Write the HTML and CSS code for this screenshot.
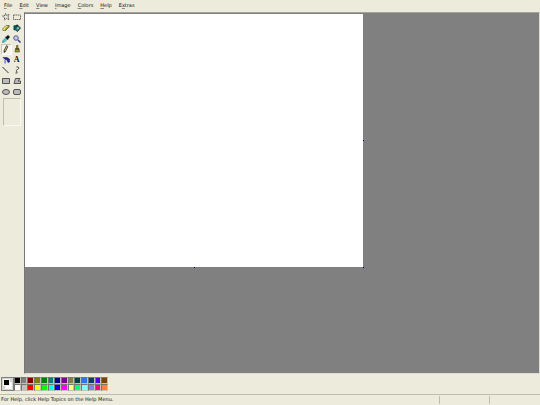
FILE: index.html
```html
<!DOCTYPE html>
<html lang="en">
<head>
    <meta charset="UTF-8">
    <meta name="viewport" content="width=device-width, initial-scale=1.0">
    <title>Paint</title>
    <link rel="stylesheet" href="styles.css">
</head>
<body>

<nav class="menu-bar">
    <button><u>F</u>ile</button>
    <button><u>E</u>dit</button>
    <button><u>V</u>iew</button>
    <button><u>I</u>mage</button>
    <button><u>C</u>olors</button>
    <button><u>H</u>elp</button>
    <button>E<u>x</u>tras</button>
</nav>

<main class="main">
    <aside class="toolbox">
        <div class="tools">
            <button class="tool" aria-label="Free-form select">
                <svg viewBox="0 0 16 16"><path d="M7 1l2 4 5-2-2 5 2 5-5-2-4 3V9L1 6l5-1z" fill="none" stroke="#333" stroke-width="1.5" stroke-dasharray="3 1"/></svg>
            </button>
            <button class="tool" aria-label="Select">
                <svg viewBox="0 0 16 16"><path d="M1 4h14v9H1z" fill="none" stroke="#444" stroke-width="1.5" stroke-dasharray="3 1"/></svg>
            </button>
            <button class="tool" aria-label="Eraser">
                <svg viewBox="0 0 16 16"><path d="M1 10l7-7h6v3l-7 7H2z" fill="#e6e26a" stroke="#55521c" stroke-width="1.2"/><path d="M7 10l7-7v3l-7 7z" fill="#a39f35" stroke="#55521c"/></svg>
            </button>
            <button class="tool" aria-label="Fill with color">
                <svg viewBox="0 0 16 16"><path d="M4 6l5-4 6 6-6 7-6-5z" fill="#2b7f86" stroke="#111" stroke-width="1.5"/><path d="M1 3l6-1 2 4-4 1v6l-4-1z" fill="#074f58"/><path d="M8 1v5" stroke="#111" stroke-width="1.5"/><path d="M9 6l3 2-3 3z" fill="#ddd"/></svg>
            </button>
            <button class="tool" aria-label="Pick color">
                <svg viewBox="0 0 16 16"><path d="M1 15l1-4 6-6 3 3-6 6z" fill="#4bd0d5" stroke="#155" stroke-width="1"/><path d="M6 4l6 6 1-3 3-3-4-4-3 3z" fill="#111"/></svg>
            </button>
            <button class="tool" aria-label="Magnifier">
                <svg viewBox="0 0 16 16"><circle cx="6" cy="6" r="4.5" fill="#bcd2ee" stroke="#55558d" stroke-width="2"/><path d="M10 10l5 5" stroke="#38388c" stroke-width="3"/></svg>
            </button>
            <button class="tool selected" aria-label="Pencil">
                <svg viewBox="0 0 16 16"><path d="M9 1l3 2-5 10-3 2V11z" fill="#b8a354" stroke="#222" stroke-width="1.3"/><path d="M4 12v3l3-2z" fill="#111"/></svg>
            </button>
            <button class="tool" aria-label="Brush">
                <svg viewBox="0 0 16 16"><path d="M7 1h3v6h2l1 7H4l1-7h2z" fill="#9a9530" stroke="#333210"/><path d="M5 7h7v2H5z" fill="#282710"/></svg>
            </button>
            <button class="tool" aria-label="Airbrush">
                <svg viewBox="0 0 16 16"><path d="M2 3h8l5 3v6l-3 1-2-5-4-1z" fill="#25259a" stroke="#10104d"/><path d="M4 8l4 1v6H5z" fill="#8a8acb"/></svg>
            </button>
            <button class="tool" aria-label="Text"><b>A</b></button>
            <button class="tool" aria-label="Line">
                <svg viewBox="0 0 16 16"><path d="M1 2l12 12" stroke="#222" stroke-width="1.8"/></svg>
            </button>
            <button class="tool" aria-label="Curve">
                <svg viewBox="0 0 16 16"><path d="M7 2c5-1 6 3 2 5s-2 3-1 5-1 3-3 2" fill="none" stroke="#222" stroke-width="1.8"/></svg>
            </button>
            <button class="tool" aria-label="Rectangle">
                <svg viewBox="0 0 16 16"><path d="M1 3h14v10H1z" fill="#bbb" stroke="#444" stroke-width="1.8"/></svg>
            </button>
            <button class="tool" aria-label="Polygon">
                <svg viewBox="0 0 16 16"><path d="M5 3h9l-4 5h5v5H2z" fill="#bbb" stroke="#444" stroke-width="1.8"/></svg>
            </button>
            <button class="tool" aria-label="Ellipse">
                <svg viewBox="0 0 16 16"><ellipse cx="8" cy="8" rx="7" ry="5" fill="#bbb" stroke="#444" stroke-width="1.8"/></svg>
            </button>
            <button class="tool" aria-label="Rounded rectangle">
                <svg viewBox="0 0 16 16"><rect x="1" y="3" width="14" height="10" rx="3" fill="#bbb" stroke="#444" stroke-width="1.8"/></svg>
            </button>
        </div>
        <div class="tool-options"></div>
    </aside>

    <section class="workspace">
        <div class="paper">
            <canvas class="canvas" width="338" height="253"></canvas>
            <span class="handle right"></span>
            <span class="handle bottom"></span>
            <span class="handle corner"></span>
        </div>
    </section>
</main>

<div class="color-box">
    <div class="current-colors">
        <span class="background"></span>
        <span class="foreground"></span>
    </div>
    <div class="palette" id="palette"></div>
</div>

<footer class="status-bar">
    <span class="status-text">For Help, click Help Topics on the Help Menu.</span>
    <span class="status-cell"></span>
    <span class="status-cell"></span>
</footer>

<script>
    const colors = [
        "#000000", "#808080", "#800000", "#808000", "#008000", "#008080", "#000080",
        "#800080", "#808040", "#004040", "#3373e6", "#0b3b73", "#4b00e6", "#804000",
        "#ffffff", "#c0c0c0", "#ff0000", "#ffff00", "#00ff00", "#00ffff", "#0000ff",
        "#ff00ff", "#ffff80", "#00ff80", "#80ffff", "#8080ff", "#ff0080", "#ff8040"
    ];
    const palette = document.getElementById("palette");

    colors.forEach(color => {
        const swatch = document.createElement("button");
        swatch.className = "swatch";
        swatch.style.backgroundColor = color;
        swatch.setAttribute("aria-label", color);
        palette.appendChild(swatch);
    });
</script>

</body>
</html>
```

FILE: styles.css
```css
* {
    box-sizing: border-box;
}

body {
    display: flex;
    flex-direction: column;
    height: 100vh;
    margin: 0;
    background-color: #edebdc;
    color: #111;
    font-family: "DejaVu Sans", Verdana, sans-serif;
    font-size: 5px;
    line-height: 8px;
    overflow: hidden;
}

button {
    margin: 0;
    padding: 0;
    border: 0;
    background: none;
    color: inherit;
    font: inherit;
}

/* menu */
.menu-bar {
    display: flex;
    height: 12px;
    padding: 1px 1px 3px;
}

.menu-bar button {
    padding: 0 4px 0 3px;
}

.menu-bar u {
    text-decoration-color: #888;
}

.main {
    display: flex;
    flex: 1;
    min-height: 0;
}

/* tools */
.toolbox {
    width: 24px;
    padding-left: 1px;
}

.tools {
    display: grid;
    grid-template-columns: 1fr 1fr;
    grid-template-rows: repeat(8, 1fr);
    width: 21px;
    height: 85px;
}

.tool {
    display: flex;
    align-items: center;
    justify-content: center;
    min-height: 0;
}

.tool svg {
    width: 8px;
    height: 8px;
}

.tool b {
    font-family: "Liberation Serif", serif;
    font-size: 8px;
}

.tool.selected {
    border: 1px solid #fff;
    border-top-color: #c8c6b8;
    border-left-color: #c8c6b8;
    background-color: #f7f6ee;
}

.tool-options {
    width: 18px;
    height: 28px;
    margin: 1px 0 0 2px;
    border: 1px solid #f9f8f2;
    border-top-color: #bfbdae;
    border-left-color: #bfbdae;
}

/* drawing area */
.workspace {
    flex: 1;
    border: 1px solid #dddcd2;
    border-top-color: #a5a49c;
    border-left-color: #777;
    background-color: #808080;
}

.paper {
    position: relative;
    width: fit-content;
    padding-top: 1px;
}

.canvas {
    display: block;
    background-color: #fff;
}

.handle {
    position: absolute;
    width: 1px;
    height: 1px;
    background-color: #000040;
}

.handle.right {
    top: 50%;
    right: -1px;
}

.handle.bottom {
    bottom: -1px;
    left: 50%;
}

.handle.corner {
    right: -1px;
    bottom: -1px;
}

/* colors */
.color-box {
    display: flex;
    height: 20px;
    padding: 3px 1px;
}

.current-colors {
    position: relative;
    width: 13px;
    height: 14px;
    border: 1px solid #808080;
    background-color: #d4d4d0;
}

.foreground,
.background {
    position: absolute;
    width: 7px;
    height: 7px;
    border: 1px solid #f4f4f4;
}

.foreground {
    top: 1px;
    left: 1px;
    background-color: #000;
}

.background {
    right: 1px;
    bottom: 1px;
    background-color: #fff;
}

.palette {
    display: grid;
    grid-template-columns: repeat(14, 1fr);
    grid-template-rows: 1fr 1fr;
    width: 94px;
    height: 14px;
}

.swatch {
    border: 1px solid #c5c3b8;
    border-top-color: #77766e;
    border-left-color: #77766e;
}

/* status */
.status-bar {
    display: flex;
    height: 11px;
    padding-left: 1px;
    border-top: 1px solid #bfbdae;
}

.status-text {
    flex: 1;
}

.status-cell {
    width: 50px;
    height: 8px;
    margin-top: 1px;
    border-left: 1px solid #bfbdae;
}

.status-cell:last-child {
    width: 51px;
}
```
